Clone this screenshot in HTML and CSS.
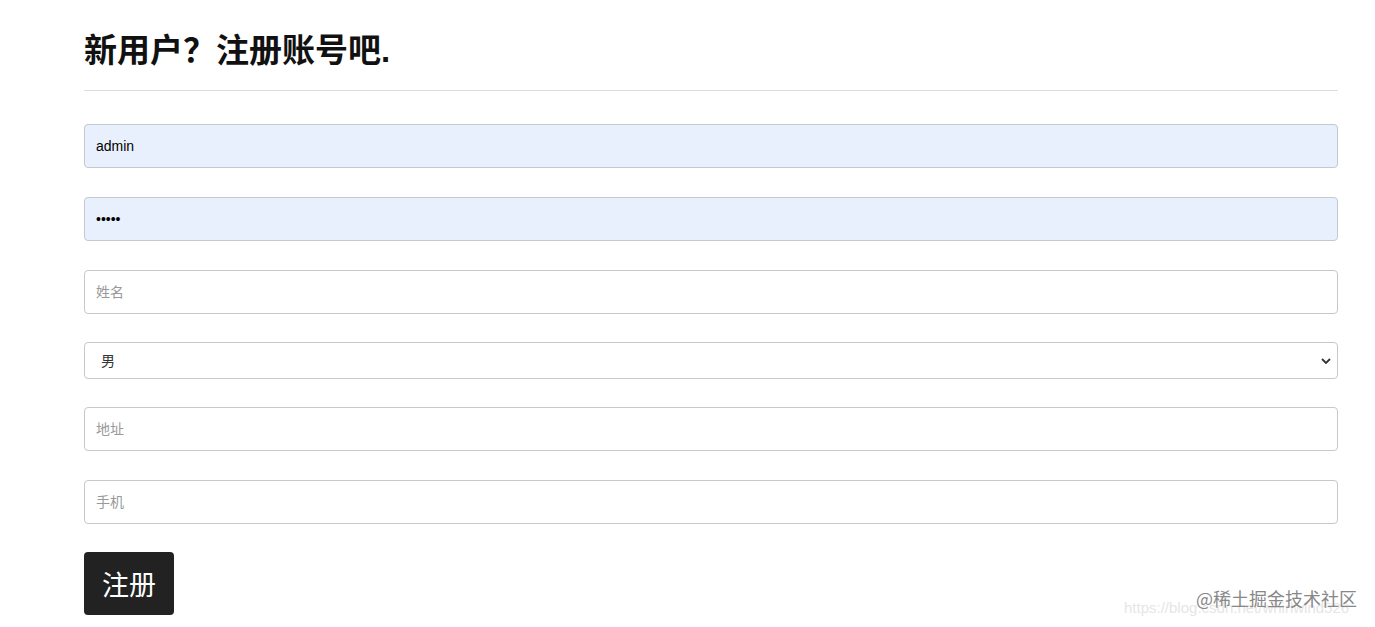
FILE: index.html
```html
<!DOCTYPE html>
<html lang="zh">
<head>
<meta charset="utf-8">
<title>注册</title>
<link rel="stylesheet" href="styles.css">
</head>
<body>
<div class="page">
  <h1 class="title">新用户？注册账号吧.</h1>
  <hr class="rule">
  <form class="form">
    <input class="field autofill" type="text" value="admin">
    <input class="field autofill" type="password" value="admin">
    <input class="field" type="text" placeholder="姓名">
    <select class="field select">
      <option>男</option>
      <option>女</option>
    </select>
    <input class="field" type="text" placeholder="地址">
    <input class="field" type="text" placeholder="手机">
    <div class="actions">
      <button class="btn" type="button">注册</button>
    </div>
  </form>
</div>
<div class="watermark">
  <span class="wm-url">https://blog.csdn.net/whirlwind526</span>
  <span class="wm-brand">@稀土掘金技术社区</span>
</div>
</body>
</html>
```

FILE: styles.css
```css
html, body {
  margin: 0;
  padding: 0;
  background: #fff;
}
body {
  font-family: "Liberation Sans", Arial, "Noto Sans CJK SC", sans-serif;
  font-size: 14px;
  color: #333;
}
.page {
  width: 1254px;
  margin-left: 84px;
  padding-top: 29px;
}
.title {
  margin: 0;
  font-family: "Liberation Sans", Arial, "Noto Sans CJK SC", sans-serif;
  font-size: 33px;
  font-weight: 700;
  line-height: 44px;
  color: #111;
}
.rule {
  margin: 17px 0 0 0;
  border: 0;
  border-top: 1px solid #dedede;
  height: 0;
}
.form {
  display: flex;
  flex-direction: column;
  gap: 29px;
  padding-top: 33px;
}
.field {
  box-sizing: border-box;
  display: block;
  width: 100%;
  height: 44px;
  margin: 0;
  padding: 0 11px;
  border: 1px solid #c8c8c8;
  border-radius: 4px;
  background: #fff;
  font-family: "Liberation Sans", Arial, "Noto Sans CJK SC", sans-serif;
  font-size: 14px;
  color: #222;
  outline: none;
}
.field::placeholder {
  color: #999;
}
.autofill {
  background: #e8f0fe;
  border-color: #c4c8cf;
  color: #000;
}
.select {
  height: 37px;
  margin-top: -1px;
  margin-bottom: -1px;
  padding-left: 16px;
  -webkit-appearance: none;
  appearance: none;
  color: #333;
  background-image: url("data:image/svg+xml;utf8,<svg xmlns='http://www.w3.org/2000/svg' width='10' height='6' viewBox='0 0 10 6'><path d='M1 1l4 4 4-4' fill='none' stroke='%23333' stroke-width='1.8'/></svg>");
  background-repeat: no-repeat;
  background-position: right 6px center;
  background-size: 10px 6px;
}
.actions {
  margin-top: -1px;
}
.btn {
  width: 90px;
  height: 63px;
  padding: 0;
  border: 0;
  border-radius: 4px;
  background: #222;
  color: #fff;
  font-family: "Noto Sans CJK SC", sans-serif;
  font-size: 27px;
  cursor: pointer;
}
.watermark {
  position: absolute;
  left: 1124px;
  top: 585px;
  width: 245px;
  height: 36px;
}
.wm-url {
  position: absolute;
  left: 0;
  top: 14px;
  font-family: "Liberation Sans", Arial, sans-serif;
  font-size: 15px;
  color: #e6e6e6;
  white-space: nowrap;
}
.wm-brand {
  position: absolute;
  left: 72px;
  top: 0;
  font-family: "Noto Sans CJK SC", sans-serif;
  font-size: 18px;
  color: #888;
  white-space: nowrap;
}
```
